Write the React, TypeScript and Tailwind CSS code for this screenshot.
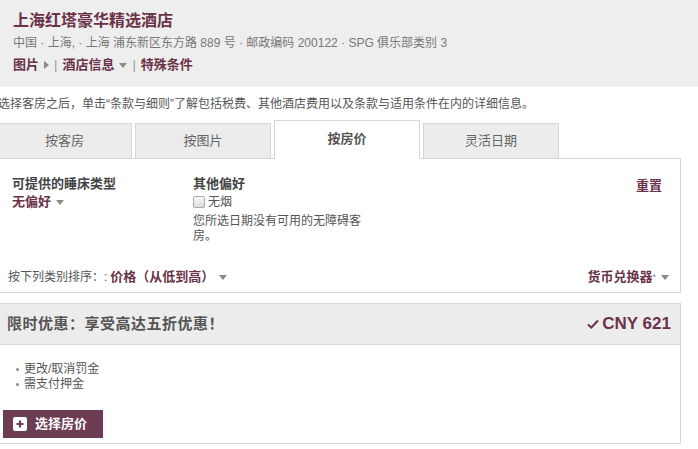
import React from "react";

const maroon = "text-[#6b3349]";

function Caret({ dir = "down" }: { dir?: "down" | "right" }) {
  // tiny gray triangle used next to dropdown links
  return dir === "down" ? (
    <span className="inline-block w-0 h-0 border-l-[4px] border-r-[4px] border-t-[5px] border-l-transparent border-r-transparent border-t-[#8a8a8a] align-middle ml-[5px]" />
  ) : (
    <span className="inline-block w-0 h-0 border-t-[4px] border-b-[4px] border-l-[5px] border-t-transparent border-b-transparent border-l-[#8a8a8a] align-middle ml-[5px]" />
  );
}

const tabs = [
  { label: "按客房", w: "w-[135px]", active: false },
  { label: "按图片", w: "w-[136px]", active: false },
  { label: "按房价", w: "w-[146px]", active: true },
  { label: "灵活日期", w: "w-[136px]", active: false },
];

export default function App() {
  return (
    <div className="w-[698px] h-[449px] overflow-hidden bg-white font-['Liberation_Sans','Noto_Sans_CJK_SC',sans-serif] text-[#555]">
      {/* hotel header */}
      <div className="h-[87px] bg-[#eeeeee] pl-[13px] pt-[10px]">
        <h1 className={`text-[16px] leading-[22px] font-bold ${maroon}`}>上海红塔豪华精选酒店</h1>
        <p className="text-[12px] leading-[16px] text-[#777] mt-[3px]">
          中国 · 上海, · 上海 浦东新区东方路 889 号 · 邮政编码 200122 · SPG 俱乐部类别 3
        </p>
        <div className={`flex items-center text-[13px] leading-[18px] font-bold mt-[5px] ${maroon}`}>
          <span>图片</span>
          <Caret dir="right" />
          <span className="mx-[5px] font-normal text-[#999]">|</span>
          <span>酒店信息</span>
          <Caret />
          <span className="mx-[5px] font-normal text-[#999]">|</span>
          <span>特殊条件</span>
        </div>
      </div>

      <div className="-ml-[3px]">
        <p className="text-[12px] leading-[16px] text-[#555] mt-[9px] pl-[1px]">
          选择客房之后，单击“条款与细则”了解包括税费、其他酒店费用以及条款与适用条件在内的详细信息。
        </p>

        {/* tabs */}
        <div className="flex items-end h-[38px] mt-[8px] relative z-10">
          {tabs.map((t, i) => (
            <div
              key={t.label}
              className={`${t.w} ${i > 0 ? "ml-[3px]" : ""} flex items-center justify-center text-[13px] ${
                t.active
                  ? "h-[39px] -mb-px bg-white border border-b-0 border-[#d6d6d6] font-bold text-[#555] pb-[3px]"
                  : "h-[35px] bg-[#ececec] border border-b-0 border-[#d6d6d6] text-[#666]"
              }`}
            >
              {t.label}
            </div>
          ))}
        </div>

        {/* filters panel */}
        <div className="w-[684px] h-[135px] border-t border-r border-b border-[#d6d6d6] flex flex-col">
          <div className="flex pl-[15px] pr-[18px] pt-[17px]">
            <div className="w-[181px]">
              <div className="text-[13px] leading-[16px] font-bold text-[#444]">可提供的睡床类型</div>
              <div className={`text-[13px] leading-[18px] font-bold mt-[1px] ${maroon}`}>
                无偏好
                <Caret />
              </div>
            </div>
            <div className="w-[172px]">
              <div className="text-[13px] leading-[16px] font-bold text-[#444]">其他偏好</div>
              <label className="flex items-center h-[18px] text-[12px] text-[#555] mt-[1px]">
                <span className="w-[12px] h-[12px] border border-[#aaa] rounded-[2px] bg-gradient-to-b from-[#fafafa] to-[#dcdcdc] mr-[3px]" />
                无烟
              </label>
              <p className="text-[12px] leading-[15px] text-[#555] mt-[3px]">
                您所选日期没有可用的无障碍客房。
              </p>
            </div>
            <div className={`ml-auto text-[13px] leading-[16px] font-bold pt-[2px] ${maroon}`}>重置</div>
          </div>
          <div className="mt-auto mb-[7px] flex items-center pl-[11px] pr-[11px] text-[12px] leading-[16px]">
            <span className="text-[#555]">按下列类别排序：:</span>
            <span className={`font-bold text-[13px] ml-[3px] ${maroon}`}>价格（从低到高）</span>
            <Caret />
            <span className={`ml-auto font-bold text-[13px] ${maroon}`}>
              货币兑换器<span className="text-[9px] font-normal text-[#888] align-top">*</span>
            </span>
            <Caret />
          </div>
        </div>

        {/* rate card */}
        <div className="w-[684px] mt-[10px] border-t border-r border-b border-[#d6d6d6]">
          <div className="h-[41px] bg-[#ececec] border-b border-[#d6d6d6] flex items-center pl-[10px] pr-[9px]">
            <span className="text-[15px] font-bold text-[#555] tracking-[0.5px]">限时优惠：享受高达五折优惠！</span>
            <span className={`ml-auto flex items-center text-[17px] font-bold ${maroon}`}>
              <svg width="12" height="10" viewBox="0 0 12 10" className="mr-[3px]">
                <path d="M1 5.5 L4.3 8.5 L11 1.5" fill="none" stroke="#6b3349" strokeWidth="2" />
              </svg>
              CNY 621
            </span>
          </div>
          <div className="pt-[17px] pl-[19px]">
            <ul className="text-[12px] leading-[15px] text-[#555]">
              <li className="flex items-center">
                <span className="w-[3px] h-[3px] rounded-full bg-[#888] mr-[5px]" />
                更改/取消罚金
              </li>
              <li className="flex items-center">
                <span className="w-[3px] h-[3px] rounded-full bg-[#888] mr-[5px]" />
                需支付押金
              </li>
            </ul>
          </div>
          <div className="pl-[6px] mt-[18px] pb-[5px]">
            <button className="w-[100px] h-[28px] bg-[#6e3b54] flex items-center pl-[10px] text-white text-[13px] font-bold">
              <span className="w-[14px] h-[14px] bg-white rounded-[2px] flex items-center justify-center mr-[8px]">
                <svg width="8" height="8" viewBox="0 0 8 8">
                  <path d="M4 0.5 V7.5 M0.5 4 H7.5" stroke="#6e3b54" strokeWidth="2" />
                </svg>
              </span>
              选择房价
            </button>
          </div>
        </div>
      </div>
    </div>
  );
}
